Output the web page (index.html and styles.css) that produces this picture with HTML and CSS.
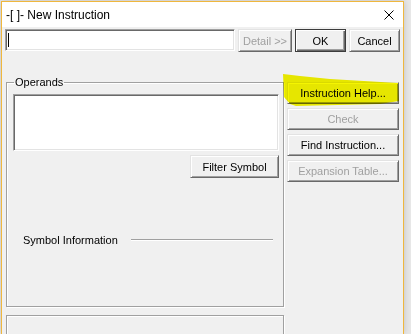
FILE: index.html
```html
<!DOCTYPE html>
<html lang="en">
<head>
    <meta charset="UTF-8">
    <title>New Instruction</title>
    <link rel="stylesheet" href="styles.css">
</head>
<body>
    <div class="window">
        <div class="titlebar">
            <span class="title">-[ ]- New Instruction</span>
            <span class="close">
                <svg width="10" height="10" viewBox="0 0 10 10">
                    <path d="M0.5 0.5 L9.5 9.5 M9.5 0.5 L0.5 9.5" stroke="#000" stroke-width="1" fill="none"/>
                </svg>
            </span>
        </div>

        <div class="toprow">
            <div class="field"><span class="caret"></span></div>
            <button class="btn btn-detail" disabled>Detail &gt;&gt;</button>
            <button class="btn btn-ok default">OK</button>
            <button class="btn btn-cancel">Cancel</button>
        </div>

        <div class="main">
            <div class="left">
                <fieldset class="group">
                    <legend>Operands</legend>
                    <div class="listbox"></div>
                    <div class="filter-row">
                        <button class="btn btn-filter">Filter Symbol</button>
                    </div>
                    <div class="symbol-info">
                        <span>Symbol Information</span>
                        <span class="rule"></span>
                    </div>
                </fieldset>
                <div class="group lower"></div>
            </div>

            <div class="side">
                <button class="btn btn-side">Instruction Help...</button>
                <button class="btn btn-side" disabled>Check</button>
                <button class="btn btn-side">Find Instruction...</button>
                <button class="btn btn-side" disabled>Expansion Table...</button>
            </div>
        </div>
    </div>

    <svg class="highlight" width="122" height="38" viewBox="281 72 122 38">
        <polygon points="283,74 300,76 330,79 398,83 399,101 380,104 296,106 290,104 284,97" fill="#f5f500"/>
    </svg>
</body>
</html>
```
FILE: styles.css
```css
* {
    box-sizing: border-box;
}
body {
    margin: 0;
    height: 334px;
    overflow: hidden;
    background: #e8e8e8;
    font-family: "Liberation Sans", Arial, sans-serif;
    font-size: 11px;
    color: #000;
}
.window {
    margin: 1px 0 0 1px;
    width: 403px;
    height: 333px;
    overflow: hidden;
    border: 1px solid #efb73e;
    border-bottom: none;
    background: #f0f0f0;
    box-shadow: 0 0 7px rgba(0,0,0,0.18);
}
.titlebar {
    height: 25px;
    background: #fff;
    display: flex;
    align-items: center;
    justify-content: space-between;
    padding-left: 4px;
    font-size: 12px;
}
.close {
    width: 28px;
    height: 25px;
    display: flex;
    align-items: center;
    justify-content: center;
}
.toprow {
    display: flex;
    align-items: flex-start;
    margin-top: 2px;
    padding-left: 3px;
}
.field {
    width: 230px;
    height: 22px;
    background: #fff;
    border: 1px solid;
    border-color: #a0a0a0 #fff #fff #a0a0a0;
    box-shadow: inset 1px 1px #696969, inset -1px -1px #e3e3e3;
    padding: 3px 0 0 2px;
}
.caret {
    display: block;
    width: 1px;
    height: 14px;
    background: #000;
}
.btn {
    height: 23px;
    padding: 0;
    background: #f0f0f0;
    border: 1px solid;
    border-color: #e3e3e3 #696969 #696969 #e3e3e3;
    box-shadow: inset 1px 1px #fff, inset -1px -1px #a0a0a0;
    font-family: inherit;
    font-size: 11px;
    color: #000;
}
.btn:disabled {
    color: #a0a0a0;
}
.btn.default {
    border: 1px solid #3c3c3c;
    box-shadow: inset 1px 1px #fff, inset -1px -1px #696969, inset -2px -2px #a0a0a0;
}
.btn-detail {
    width: 54px;
    margin-left: 3px;
}
.btn-ok {
    width: 51px;
    margin-left: 3px;
}
.btn-cancel {
    width: 51px;
    margin-left: 3px;
}
.main {
    display: flex;
    align-items: flex-start;
    margin-top: 23px;
    padding-left: 4px;
}
.left {
    width: 278px;
}
.group {
    border: 1px solid #a0a0a0;
    box-shadow: 1px 1px #fff, inset 1px 1px #fff;
}
fieldset.group {
    margin: 0;
    height: 232px;
    padding: 5px 4px 0 6px;
}
legend {
    padding: 0 1px;
    margin-left: 1px;
    line-height: 14px;
}
.listbox {
    height: 57px;
    background: #fff;
    border: 1px solid;
    border-color: #a0a0a0 #fff #fff #a0a0a0;
    box-shadow: inset 1px 1px #696969, inset -1px -1px #e3e3e3;
}
.filter-row {
    display: flex;
    justify-content: flex-end;
    margin-top: 4px;
}
.btn-filter {
    width: 89px;
}
.symbol-info {
    display: flex;
    align-items: center;
    margin-top: 55px;
    padding: 0 6px 0 10px;
    line-height: 14px;
}
.rule {
    flex: 1;
    margin-left: 13px;
    height: 2px;
    border-top: 1px solid #a0a0a0;
    border-bottom: 1px solid #fff;
}
.lower {
    margin-top: 8px;
    height: 40px;
}
.side {
    display: flex;
    flex-direction: column;
    gap: 4px;
    margin-top: 7px;
    margin-left: 3px;
}
.btn-side {
    width: 112px;
    height: 22px;
}
.highlight {
    position: absolute;
    left: 281px;
    top: 72px;
    mix-blend-mode: multiply;
    pointer-events: none;
}
```
